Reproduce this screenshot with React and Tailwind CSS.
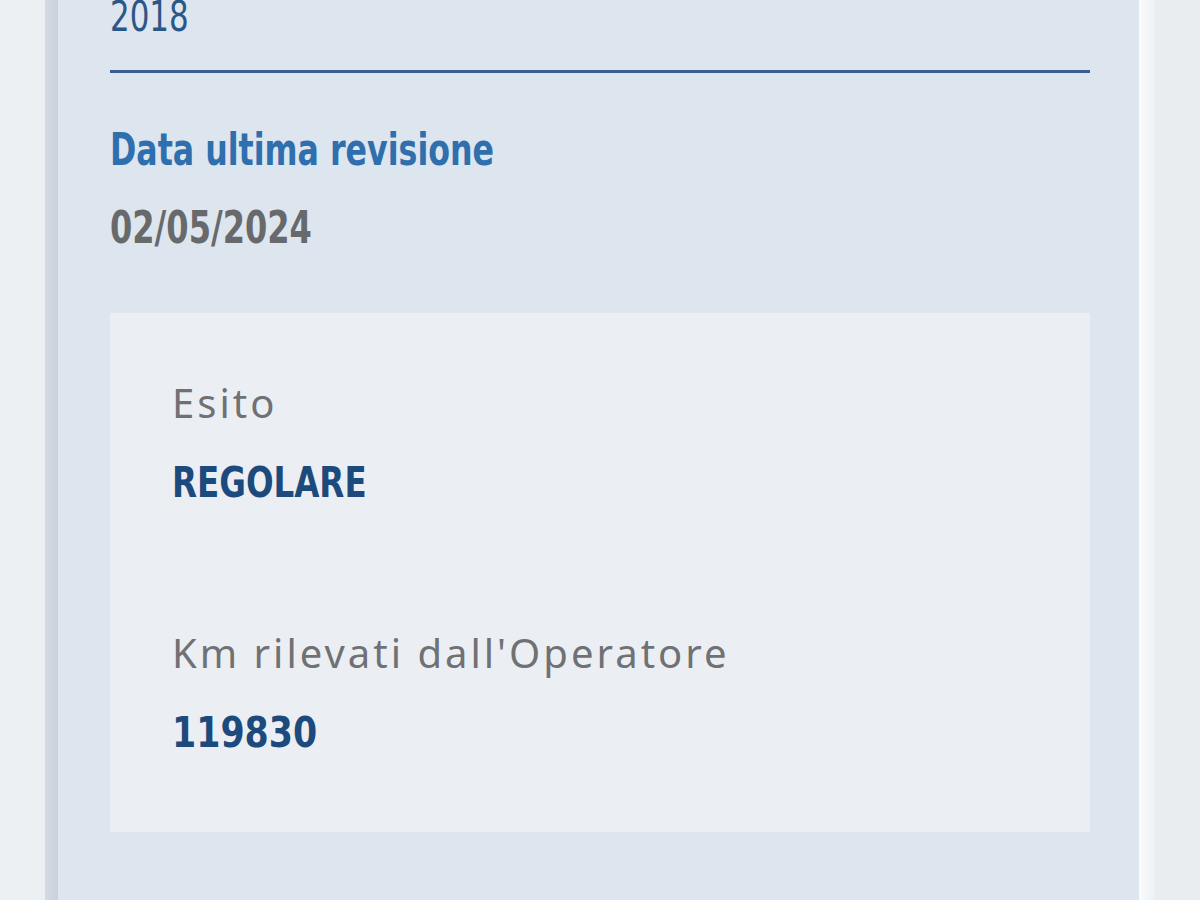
const narrow = { fontFamily: '"Liberation Sans Narrow", "DejaVu Sans Condensed", "Liberation Sans", sans-serif' };
const plain = { fontFamily: '"Noto Sans", "Open Sans", sans-serif' };

const Field = ({ label, value, squeeze, className = '' }) => (
    <div className={className}>
        <p className="text-[40px] leading-none text-[#6f7174] tracking-[3px]" style={plain}>{label}</p>
        <p className="mt-[37px] text-[42px] leading-none font-bold text-[#1d4a7c]">
            <span className={`inline-block origin-left ${squeeze}`} style={narrow}>{value}</span>
        </p>
    </div>
);

const App = () => {
    return (
        <div className="w-[1200px] h-[900px] overflow-hidden bg-[#edf0f3] flex">
            <div className="w-[45px] shrink-0" />
            <div className="w-[13px] shrink-0 bg-gradient-to-r from-[#d3dae3] to-[#c9d2dc]" />
            <div className="w-[1081px] shrink-0 bg-[#dde5ee] pl-[52px] pr-[49px]">
                <p className="-mt-[9px] text-[43px] leading-[48px] text-[#2b5788]">
                    <span className="inline-block origin-left scale-x-[0.8]" style={narrow}>2018</span>
                </p>
                <div className="mt-[30px] h-[3px] bg-[#3a5f8f]" />
                <h2 className="mt-[50px] text-[44px] leading-[51px] font-bold text-[#2f6fad]">
                    <span className="inline-block origin-left scale-x-[0.8]" style={narrow}>Data ultima revisione</span>
                </h2>
                <p className="mt-[26px] text-[44px] leading-[51px] font-bold text-[#67696b]">
                    <span className="inline-block origin-left scale-x-[0.81]" style={narrow}>02/05/2024</span>
                </p>
                <div className="mt-[60px] h-[519px] bg-[#ebeff3] pl-[62px] pt-[70px]">
                    <Field label="Esito" value="REGOLARE" squeeze="scale-x-[0.86]" />
                    <Field label="Km rilevati dall'Operatore" value="119830" squeeze="scale-x-[0.92]" className="mt-[129px]" />
                </div>
            </div>
            <div className="w-[16px] shrink-0 bg-gradient-to-r from-[#f9fbfc] to-[#eef1f4]" />
            <div className="flex-1 bg-[#e9edf0]" />
        </div>
    );
};

export default App;
